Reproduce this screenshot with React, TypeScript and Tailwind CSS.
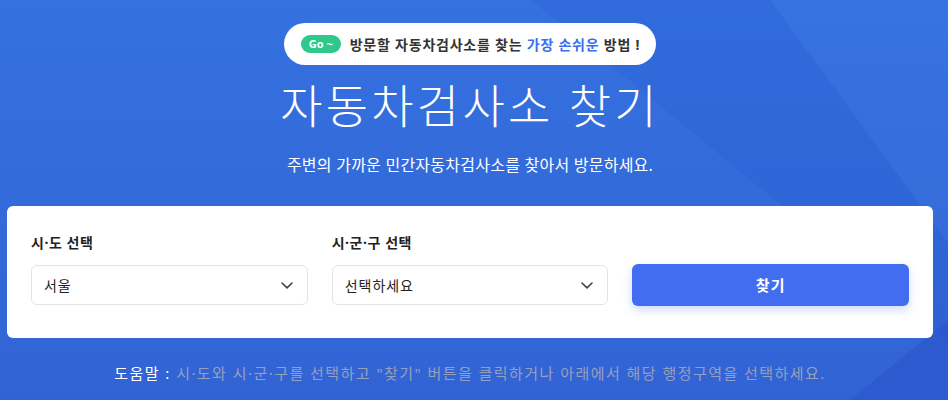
import React from "react";

const FONT = { fontFamily: '"Noto Sans", "Noto Sans CJK KR", sans-serif' };

function Chevron() {
  return (
    <svg width="12" height="7" viewBox="0 0 12 7" fill="none">
      <path d="M1 1 L6 5.8 L11 1" stroke="#3f4450" strokeWidth="1.6" strokeLinecap="round" strokeLinejoin="round" />
    </svg>
  );
}

function Select({ value }: { value: string }) {
  return (
    <div className="flex h-[40px] items-center justify-between rounded-[6px] border border-[#e2e4e8] bg-white pl-[12px] pr-[14px]">
      <span className="text-[14px] tracking-[0.07em] text-[#222]">{value}</span>
      <Chevron />
    </div>
  );
}

export default function App() {
  return (
    <div
      className="relative h-[400px] w-[948px] overflow-hidden bg-gradient-to-b from-[#3571e0] to-[#3263d4]"
      style={FONT}
    >
      <svg className="absolute inset-0" width="948" height="400" viewBox="0 0 948 400">
        <polygon points="531,0 770,0 948,243 948,342" fill="#1f4fc4" opacity="0.16" />
        <polygon points="770,0 948,0 948,243" fill="#4a86f0" opacity="0.1" />
        <polygon points="850,400 948,320 948,400" fill="#2347c0" opacity="0.3" />
      </svg>
      <div className="relative w-[940px]">
        <div className="flex flex-col items-center pt-[23px]">
          <div className="flex h-[42px] items-center gap-[9px] rounded-full bg-white pl-[17px] pr-[16px]">
            <span className="flex h-[18px] w-[40px] items-center justify-center rounded-full bg-[#2dc88a] text-[11px] font-bold text-white">
              Go ~
            </span>
            <span className="text-[14px] font-bold tracking-[0.055em] text-[#333]">
              방문할 자동차검사소를 찾는 <span className="text-[#3b6ff0]">가장 손쉬운</span> 방법 !
            </span>
          </div>
          <h1 className="mt-[8px] text-[46px] font-light leading-[64px] tracking-[0.07em] text-white">자동차검사소 찾기</h1>
          <p className="mt-[16px] text-[16px] leading-[24px] tracking-[0.015em] text-white">
            주변의 가까운 민간자동차검사소를 찾아서 방문하세요.
          </p>
        </div>
        <div className="mx-[7px] mt-[29px] rounded-[6px] bg-white px-[24px] pb-[33px] pt-[27px]">
          <div className="grid grid-cols-3 items-end gap-[24px]">
            <div>
              <div className="mb-[12px] text-[14px] font-bold leading-[20px] tracking-[0.04em] text-[#222]">시·도 선택</div>
              <Select value="서울" />
            </div>
            <div>
              <div className="mb-[12px] text-[14px] font-bold leading-[20px] tracking-[0.04em] text-[#222]">시·군·구 선택</div>
              <Select value="선택하세요" />
            </div>
            <button className="mb-[-1px] h-[42px] rounded-[6px] bg-[#436df0] text-[15px] font-bold tracking-[0.07em] text-white shadow-[0_4px_10px_rgba(67,109,240,0.25)]">
              찾기
            </button>
          </div>
        </div>
        <p className="mt-[23px] text-center text-[15px] leading-[24px] tracking-[0.097em] text-[#95a0bf]">
          <span className="font-normal text-white">도움말 :</span> 시·도와 시·군·구를 선택하고 "찾기" 버튼을 클릭하거나 아래에서 해당 행정구역을 선택하세요.
        </p>
      </div>
    </div>
  );
}
